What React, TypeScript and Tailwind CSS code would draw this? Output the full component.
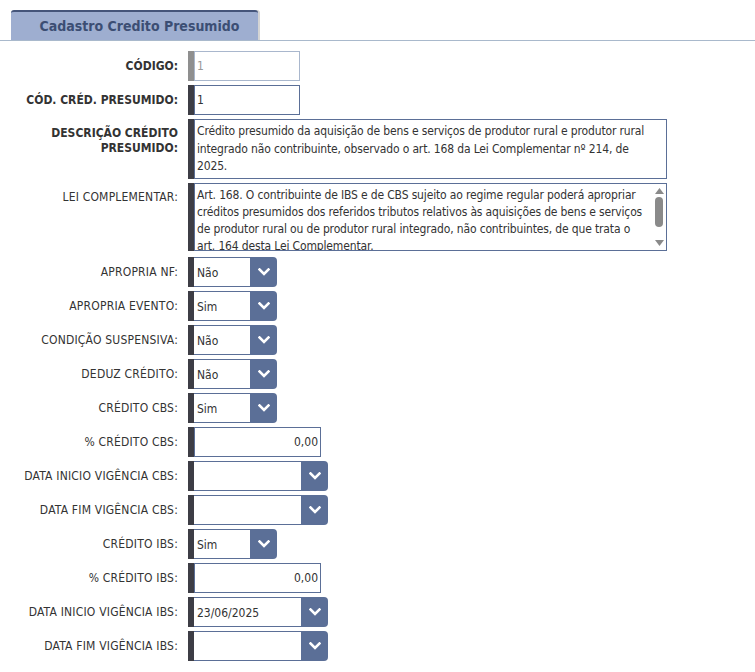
import React from "react";

const font = { fontFamily: '"DejaVu Sans Condensed", "Liberation Sans", Arial, sans-serif' };

function Chevron() {
  return (
    <svg width="12" height="8" viewBox="0 0 12 8" fill="none">
      <path d="M1.5 1.5 L6 6 L10.5 1.5" stroke="white" strokeWidth="2.6" strokeLinecap="square" />
    </svg>
  );
}

function Label({ children, bold, top }: { children: React.ReactNode; bold?: boolean; top?: boolean }) {
  return (
    <div
      className={`flex justify-end text-right text-[12px] leading-[15px] text-[#333] ${top ? "items-start pt-[7px]" : "items-center"} ${bold ? "font-bold" : "tracking-[0.2px]"}`}
    >
      <span>{children}</span>
    </div>
  );
}

function TextInput({ value, w, readOnly, right }: { value: string; w: string; readOnly?: boolean; right?: boolean }) {
  return (
    <div className={`flex h-[30px] ${w}`}>
      <div className={`w-[6px] ${readOnly ? "bg-[#8f8f8f]" : "bg-[#3d3d45]"}`} />
      <div
        className={`flex flex-1 items-center border ${readOnly ? "border-[#a9b7cd] text-[#999]" : "border-[#5b6f97] text-[#333]"} bg-white px-[2px] text-[12px] ${right ? "justify-end" : ""}`}
      >
        {value}
      </div>
    </div>
  );
}

function Select({ value, w }: { value: string; w: string }) {
  return (
    <div className={`flex h-[30px] ${w}`}>
      <div className="w-[6px] bg-[#3d3d45]" />
      <div className="flex flex-1 items-center border-y border-[#5b6f97] bg-white px-[3px] pt-[2px] text-[12px] text-[#333]">
        {value}
      </div>
      <div className="flex w-[27px] items-center justify-center rounded-r-[4px] bg-[#5b6f97]">
        <Chevron />
      </div>
    </div>
  );
}

export default function App() {
  return (
    <div className="min-h-[672px] w-[755px] bg-white" style={font}>
      <div className="border-b border-[#a9b9cc] pt-[10px]">
        <div className="ml-[11px] flex h-[30px] w-[247px] items-center justify-center rounded-t-[3px] border-t-2 border-[#45557a] bg-[#9eaed0] pl-[10px] shadow-[2px_0_0_#d4d4d4] text-[14px] font-bold text-[#3c4e74]">
          Cadastro Credito Presumido
        </div>
      </div>
      <div className="mt-[10px] grid grid-cols-[178px_1fr] gap-x-[10px] gap-y-[4px]">
        <Label bold>CÓDIGO:</Label>
        <TextInput value="1" w="w-[112px]" readOnly />

        <Label bold>CÓD. CRÉD. PRESUMIDO:</Label>
        <TextInput value="1" w="w-[112px]" />

        <Label bold top>
          DESCRIÇÃO CRÉDITO
          <br />
          PRESUMIDO:
        </Label>
        <div className="flex h-[60px] w-[479px]">
          <div className="w-[6px] bg-[#3d3d45]" />
          <div className="flex-1 border border-[#5b6f97] bg-white pl-[2px] pr-[12px] pt-[3px] text-[12px] leading-[17.5px] tracking-[-0.15px] text-[#333]">
            Crédito presumido da aquisição de bens e serviços de produtor rural e produtor rural integrado não contribuinte, observado o art. 168 da Lei Complementar nº 214, de 2025.
          </div>
        </div>

        <Label top>LEI COMPLEMENTAR:</Label>
        <div className="mb-[2px] flex h-[68px] w-[479px]">
          <div className="w-[6px] bg-[#3d3d45]" />
          <div className="flex flex-1 overflow-hidden border border-[#5b6f97] bg-white">
            <div className="flex-1 overflow-hidden pl-[2px] pt-[3px] pr-[2px] text-[12px] leading-[17px] tracking-[-0.15px] text-[#333]">
              Art. 168. O contribuinte de IBS e de CBS sujeito ao regime regular poderá apropriar créditos presumidos dos referidos tributos relativos às aquisições de bens e serviços de produtor rural ou de produtor rural integrado, não contribuintes, de que trata o art. 164 desta Lei Complementar.
            </div>
            <div className="flex w-[14px] flex-col items-center justify-between py-[4px]">
              <svg width="9" height="6" viewBox="0 0 9 6"><path d="M4.5 0 L9 6 L0 6 Z" fill="#8a8a8a" /></svg>
              <div className="mt-[3px] h-[30px] w-[8px] flex-none rounded-full bg-[#8a8a8a]" />
              <div className="flex-1" />
              <svg width="9" height="6" viewBox="0 0 9 6"><path d="M0 0 L9 0 L4.5 6 Z" fill="#8a8a8a" /></svg>
            </div>
          </div>
        </div>

        <Label>APROPRIA NF:</Label>
        <Select value="Não" w="w-[89px]" />

        <Label>APROPRIA EVENTO:</Label>
        <Select value="Sim" w="w-[89px]" />

        <Label>CONDIÇÃO SUSPENSIVA:</Label>
        <Select value="Não" w="w-[89px]" />

        <Label>DEDUZ CRÉDITO:</Label>
        <Select value="Não" w="w-[89px]" />

        <Label>CRÉDITO CBS:</Label>
        <Select value="Sim" w="w-[89px]" />

        <Label>% CRÉDITO CBS:</Label>
        <TextInput value="0,00" w="w-[133px]" right />

        <Label>DATA INICIO VIGÊNCIA CBS:</Label>
        <Select value="" w="w-[140px]" />

        <Label>DATA FIM VIGÊNCIA CBS:</Label>
        <Select value="" w="w-[140px]" />

        <Label>CRÉDITO IBS:</Label>
        <Select value="Sim" w="w-[89px]" />

        <Label>% CRÉDITO IBS:</Label>
        <TextInput value="0,00" w="w-[133px]" right />

        <Label>DATA INICIO VIGÊNCIA IBS:</Label>
        <Select value="23/06/2025" w="w-[140px]" />

        <Label>DATA FIM VIGÊNCIA IBS:</Label>
        <Select value="" w="w-[140px]" />
      </div>
    </div>
  );
}
